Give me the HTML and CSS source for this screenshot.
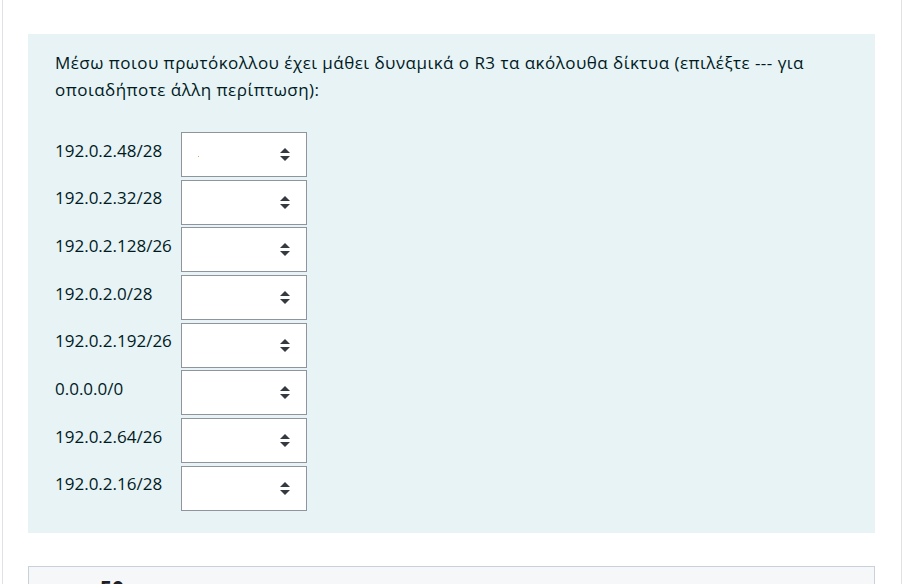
FILE: index.html
```html
<!DOCTYPE html>
<html>
<head>
<meta charset="utf-8">
<link rel="stylesheet" href="styles.css">
</head>
<body>
<div class="page">
  <div class="card">
    <div class="formulation">
      <p class="qtext">Μέσω ποιου πρωτόκολλου έχει μάθει δυναμικά ο R3 τα ακόλουθα δίκτυα (επιλέξτε --- για οποιαδήποτε άλλη περίπτωση):</p>
      <div class="answers">
        <div class="lbl">192.0.2.48/28</div><div class="sel"><span class="dot"></span><span class="arrows"></span></div>
        <div class="lbl">192.0.2.32/28</div><div class="sel"><span class="arrows"></span></div>
        <div class="lbl">192.0.2.128/26</div><div class="sel"><span class="arrows"></span></div>
        <div class="lbl">192.0.2.0/28</div><div class="sel"><span class="arrows"></span></div>
        <div class="lbl">192.0.2.192/26</div><div class="sel"><span class="arrows"></span></div>
        <div class="lbl">0.0.0.0/0</div><div class="sel"><span class="arrows"></span></div>
        <div class="lbl">192.0.2.64/26</div><div class="sel"><span class="arrows"></span></div>
        <div class="lbl">192.0.2.16/28</div><div class="sel"><span class="arrows"></span></div>
      </div>
    </div>
    <div class="next">
      <div class="qno">50</div>
    </div>
  </div>
</div>
</body>
</html>
```

FILE: styles.css
```css
html, body {
  margin: 0;
  padding: 0;
  background: #fff;
}
body {
  font-family: "Open Sans", "Noto Sans", sans-serif;
  font-size: 17px;
  color: #001a1e;
  height: 584px;
  overflow: hidden;
}
.page {
  padding-left: 2px;
  width: 899px;
  height: 584px;
  border-right: 1px solid #dee2e6;
}
.card {
  border-left: 1px solid #dee2e6;
  height: 584px;
  padding: 34px 25px 0 25px;
  box-sizing: border-box;
}
.formulation {
  background: #e7f3f5;
  width: 847px;
  padding: 15px 0 22px 27px;
  box-sizing: border-box;
}
.qtext {
  margin: 0 0 29px 0;
  line-height: 27px;
  width: 790px;
  letter-spacing: 0.47px;
}
.answers {
  display: grid;
  grid-template-columns: 126px 126px;
  row-gap: 2.7px;
}
.lbl {
  display: flex;
  align-items: center;
  margin-top: -6px;
  height: 48px;
  white-space: nowrap;
}
.sel {
  height: 45px;
  box-sizing: border-box;
  border: 1px solid #8f959e;
  background: #fff;
  position: relative;
}
.arrows {
  position: absolute;
  right: 16px;
  top: 15px;
  width: 10px;
  height: 14px;
}
.arrows::before,
.arrows::after {
  content: "";
  position: absolute;
  left: 0;
  width: 0;
  height: 0;
  border-left: 5px solid transparent;
  border-right: 5px solid transparent;
}
.arrows::before {
  top: 0;
  border-bottom: 5px solid #343a40;
}
.arrows::after {
  top: 8px;
  border-top: 5px solid #343a40;
}
.dot {
  position: absolute;
  left: 16px;
  top: 23px;
  width: 1px;
  height: 1px;
  background: #f0a040;
}
.next {
  margin-top: 33px;
  width: 847px;
  height: 40px;
  box-sizing: border-box;
  border: 1px solid #c8d0db;
  background: #f5f7f9;
  padding: 9px 0 0 71px;
}
.qno {
  font-weight: 700;
  font-size: 21px;
  line-height: 24px;
  color: #1d2125;
}
```
